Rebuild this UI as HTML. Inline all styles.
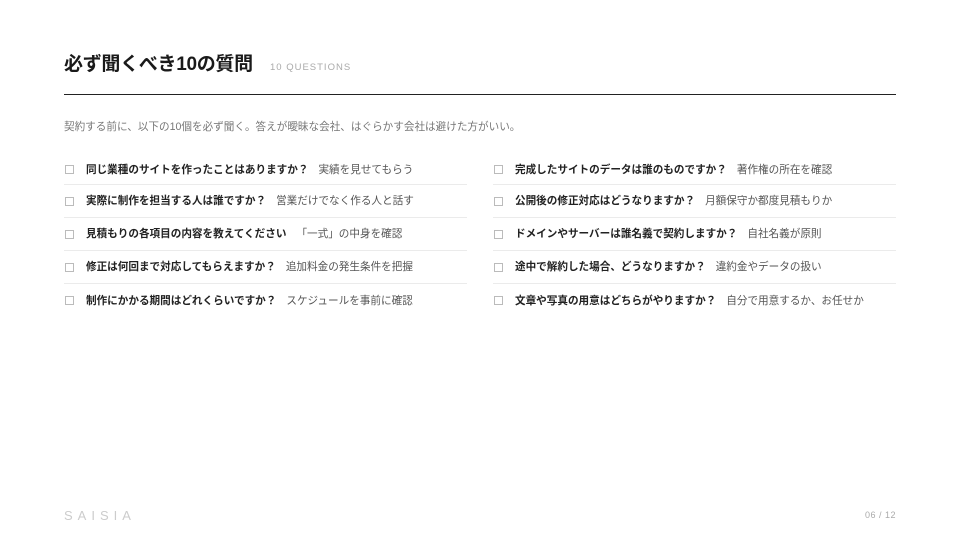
<!DOCTYPE html>
<html><head><meta charset="utf-8"><style>
*{margin:0;padding:0;box-sizing:border-box}
body{width:960px;height:540px;background:#fff;position:relative;font-family:"Liberation Sans","Noto Sans CJK JP",sans-serif;color:#222;overflow:hidden}
.t{position:absolute;left:64px;top:51px;font-size:19px;font-weight:700;color:#1a1a1a;letter-spacing:-0.3px;line-height:28px}
.st{position:absolute;left:270px;top:62px;font-size:9.5px;color:#aaa;letter-spacing:1px}
.rule{position:absolute;left:64px;top:94px;width:832px;height:1px;background:#222}
.intro{position:absolute;left:64px;top:119px;font-size:10.6px;color:#777;line-height:16px}
.col{position:absolute;top:155px;width:403px}
.row{height:33px;border-bottom:1px solid #ebebeb;display:flex;align-items:center;font-size:10.6px;line-height:16px;white-space:nowrap}
.row:first-child{height:30px}
.row:last-child{border-bottom:none}
.cb{width:9px;height:9px;border:1px solid #bbb;margin-right:12px;margin-left:1px}
.q{font-weight:700;color:#222;margin-right:10px}
.a{color:#555}
.logo{position:absolute;left:64px;top:508px;font-size:13px;letter-spacing:5px;color:#ccc;font-weight:300}
.pg{position:absolute;right:64px;top:510px;font-size:9px;color:#aaa;letter-spacing:0.5px}
</style></head><body>
<div class="t">必ず聞くべき10の質問</div>
<div class="st">10 QUESTIONS</div>
<div class="rule"></div>
<div class="intro">契約する前に、以下の10個を必ず聞く。答えが曖昧な会社、はぐらかす会社は避けた方がいい。</div>
<div class="col" style="left:64px">
<div class="row"><span class="cb"></span><span class="q">同じ業種のサイトを作ったことはありますか？</span><span class="a">実績を見せてもらう</span></div>
<div class="row"><span class="cb"></span><span class="q">実際に制作を担当する人は誰ですか？</span><span class="a">営業だけでなく作る人と話す</span></div>
<div class="row"><span class="cb"></span><span class="q">見積もりの各項目の内容を教えてください</span><span class="a">「一式」の中身を確認</span></div>
<div class="row"><span class="cb"></span><span class="q">修正は何回まで対応してもらえますか？</span><span class="a">追加料金の発生条件を把握</span></div>
<div class="row"><span class="cb"></span><span class="q">制作にかかる期間はどれくらいですか？</span><span class="a">スケジュールを事前に確認</span></div>
</div>
<div class="col" style="left:493px">
<div class="row"><span class="cb"></span><span class="q">完成したサイトのデータは誰のものですか？</span><span class="a">著作権の所在を確認</span></div>
<div class="row"><span class="cb"></span><span class="q">公開後の修正対応はどうなりますか？</span><span class="a">月額保守か都度見積もりか</span></div>
<div class="row"><span class="cb"></span><span class="q">ドメインやサーバーは誰名義で契約しますか？</span><span class="a">自社名義が原則</span></div>
<div class="row"><span class="cb"></span><span class="q">途中で解約した場合、どうなりますか？</span><span class="a">違約金やデータの扱い</span></div>
<div class="row"><span class="cb"></span><span class="q">文章や写真の用意はどちらがやりますか？</span><span class="a">自分で用意するか、お任せか</span></div>
</div>
<div class="logo">SAISIA</div>
<div class="pg">06 / 12</div>
</body></html>
